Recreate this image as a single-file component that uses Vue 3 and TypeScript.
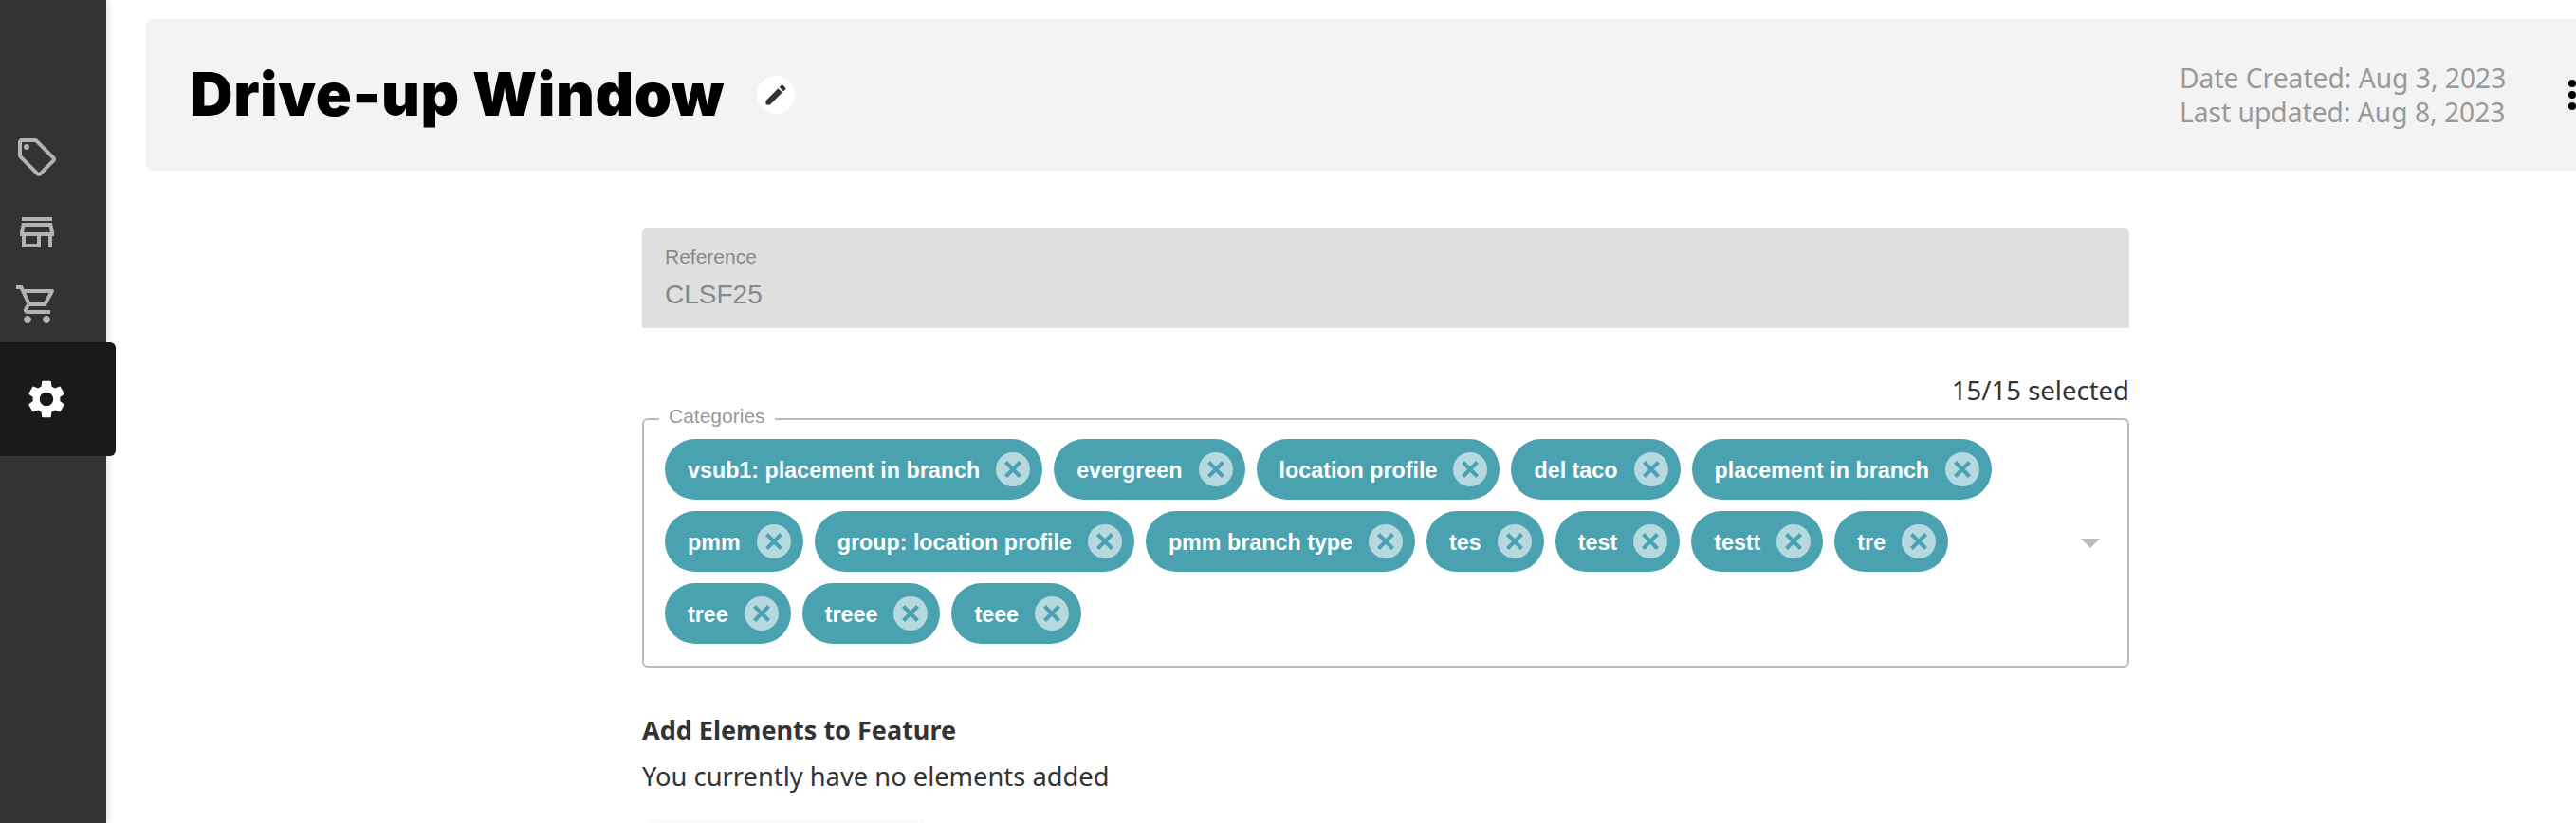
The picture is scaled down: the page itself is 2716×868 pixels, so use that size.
<script setup lang="ts">
const rows: string[][] = [
  ['vsub1: placement in branch', 'evergreen', 'location profile', 'del taco', 'placement in branch'],
  ['pmm', 'group: location profile', 'pmm branch type', 'tes', 'test', 'testt', 'tre'],
  ['tree', 'treee', 'teee'],
]
</script>

<template>
  <div class="page">
    <aside class="side">
      <svg class="ico tag" viewBox="0 0 24 24"><path fill="#b3b3b3" d="M21.41 11.58l-9-9C12.05 2.22 11.55 2 11 2H4c-1.1 0-2 .9-2 2v7c0 .55.22 1.05.59 1.42l9 9c.36.36.86.58 1.41.58s1.05-.22 1.41-.59l7-7c.37-.36.59-.86.59-1.41s-.23-1.06-.59-1.42zM13 20.01L4 11V4h7v-.01l9 8.99-7 7.02z"/><circle fill="#b3b3b3" cx="6.5" cy="6.5" r="1.5"/></svg>
      <svg class="ico store" viewBox="0 0 24 24"><path fill="#b3b3b3" d="M4 4h16v2H4zM20 7H4l-1 5v2h1v6h10v-6h4v6h2v-6h1v-2l-1-5zm-8 11H6v-4h6v4zm-6.96-6l.6-3h12.72l.6 3H5.04z"/></svg>
      <svg class="ico cart" viewBox="0 0 24 24"><path fill="#b3b3b3" d="M15.55 13c.75 0 1.41-.41 1.75-1.03l3.58-6.49A.996.996 0 0 0 20.01 4H5.21l-.94-2H1v2h2l3.6 7.59-1.35 2.44C4.52 15.37 5.48 17 7 17h12v-2H7l1.1-2h7.45zM6.16 6h12.15l-2.76 5H8.53L6.16 6zM7 18c-1.1 0-1.99.9-1.99 2S5.9 22 7 22s2-.9 2-2-.9-2-2-2zm10 0c-1.1 0-1.99.9-1.99 2s.89 2 1.99 2 2-.9 2-2-.9-2-2-2z"/></svg>
      <div class="active">
        <svg class="gear" viewBox="0 0 24 24"><path fill="#fff" d="M19.14 12.94c.04-.3.06-.61.06-.94 0-.32-.02-.64-.07-.94l2.03-1.58a.49.49 0 0 0 .12-.61l-1.92-3.32a.488.488 0 0 0-.59-.22l-2.39.96c-.5-.38-1.03-.7-1.62-.94l-.36-2.54a.484.484 0 0 0-.48-.41h-3.84c-.24 0-.43.17-.47.41l-.36 2.54c-.59.24-1.13.57-1.62.94l-2.39-.96c-.22-.08-.47 0-.59.22L2.74 8.87c-.12.21-.08.47.12.61l2.03 1.58c-.05.3-.09.63-.09.94s.02.64.07.94l-2.03 1.58a.49.49 0 0 0-.12.61l1.92 3.32c.12.22.37.29.59.22l2.39-.96c.5.38 1.03.7 1.62.94l.36 2.54c.05.24.24.41.48.41h3.84c.24 0 .44-.17.47-.41l.36-2.54c.59-.24 1.13-.56 1.62-.94l2.39.96c.22.08.47 0 .59-.22l1.92-3.32c.12-.22.07-.47-.12-.61l-2.01-1.58zM12 15.6c-1.98 0-3.6-1.62-3.6-3.6s1.62-3.6 3.6-3.6 3.6 1.62 3.6 3.6-1.62 3.6-3.6 3.6z"/></svg>
      </div>
    </aside>

    <main class="main">
      <header class="head">
        <h1 class="title">Drive-up Window</h1>
        <span class="edit">
          <svg viewBox="0 0 24 24"><path fill="#333" d="M3 17.25V21h3.75L17.81 9.94l-3.75-3.75L3 17.25zM20.71 7.04a1 1 0 0 0 0-1.41l-2.34-2.34a1 1 0 0 0-1.41 0l-1.83 1.83 3.75 3.75 1.83-1.83z"/></svg>
        </span>
        <div class="dates">
          <div>Date Created: Aug 3, 2023</div>
          <div>Last updated: Aug 8, 2023</div>
        </div>
        <div class="more"><i></i><i></i><i></i></div>
      </header>

      <section class="form">
        <div class="ref">
          <div class="ref-label">Reference</div>
          <div class="ref-value">CLSF25</div>
        </div>
        <div class="count">15/15 selected</div>
        <fieldset class="cats">
          <legend>Categories</legend>
          <div class="chips">
            <div v-for="(row, i) in rows" :key="i" class="chip-row">
              <span v-for="c in row" :key="c" class="chip">
                <span class="chip-text">{{ c }}</span>
                <span class="chip-x">
                  <svg viewBox="0 0 36 36"><path d="M10.5 10.5 L25.5 25.5 M25.5 10.5 L10.5 25.5" stroke="#4aa2b1" stroke-width="4" fill="none"/></svg>
                </span>
              </span>
            </div>
          </div>
          <span class="arrow"></span>
        </fieldset>
        <h2 class="add">Add Elements to Feature</h2>
        <p class="none">You currently have no elements added</p>
        <div class="next"></div>
      </section>
    </main>
  </div>
</template>

<style>
html, body { margin: 0; padding: 0; background: #fff; overflow: hidden; }
</style>

<style scoped>
.page { display: flex; width: 2716px; height: 868px; overflow: hidden; font-family: "Noto Sans", sans-serif; }
.side { position: relative; flex: 0 0 112px; width: 112px; min-width: 0; background: #333; box-shadow: 2px 0 8px rgba(0,0,0,.12); display: flex; flex-direction: column; align-items: flex-start; padding-top: 142px; box-sizing: border-box; z-index: 1; }
.ico { display: block; flex: none; width: 48px; height: 48px; margin-left: 15px; }
.tag { margin-bottom: 31px; }
.store { margin-bottom: 28px; }
.cart { margin-bottom: 16px; }
.active { flex: none; width: 122px; height: 120px; background: #1a1a1a; border-radius: 0 6px 6px 0; display: flex; align-items: center; padding-left: 25px; box-sizing: border-box; }
.gear { width: 48px; height: 48px; }
.main { flex: 1; min-width: 0; padding: 20px 0 0 42px; }
.head { display: flex; align-items: center; height: 160px; background: #f3f3f3; border-radius: 6px 0 0 6px; padding-left: 46px; box-sizing: border-box; }
.title { margin: -2px 0 0; font-family: "Inter", sans-serif; font-weight: 900; font-size: 63px; color: #000; letter-spacing: 0.6px; width: 598px; white-space: nowrap; }
.edit { width: 40px; height: 40px; border-radius: 50%; background: #fff; display: flex; align-items: center; justify-content: center; }
.edit svg { width: 28px; height: 28px; }
.dates { margin-left: auto; width: 410px; font-size: 28.2px; line-height: 36px; color: #999; white-space: nowrap; }
.more { display: flex; flex-direction: column; gap: 4px; width: 8px; }
.more i { display: block; width: 8px; height: 8px; border-radius: 50%; background: #000; }
.form { width: 1568px; margin: 60px 0 0 523px; }
.ref { height: 106px; background: #dfdfdf; border-radius: 6px 6px 0 0; padding: 19px 24px 0; box-sizing: border-box; font-family: "Liberation Sans", sans-serif; }
.ref-label { font-size: 21px; line-height: 24px; color: #888; }
.ref-value { font-size: 28px; line-height: 32px; margin-top: 12px; color: #888; }
.count { margin-top: 50px; text-align: right; font-size: 27.5px; line-height: 32px; color: #333; }
.cats { position: relative; margin: 1px 0 0; padding: 8px 22px 23px; border: 2px solid #bbb; border-radius: 6px; box-sizing: border-box; min-width: 0; }
.cats legend { margin-left: -6px; padding: 0 10px 6px; font-family: "Liberation Sans", sans-serif; font-size: 21px; line-height: 20px; color: #999; }
.chips { display: flex; flex-direction: column; gap: 12px; }
.chip-row { display: flex; gap: 12px; }
.chip { display: flex; align-items: center; height: 64px; border-radius: 32px; background: #4aa2b1; padding: 0 13px 0 24px; box-sizing: border-box; }
.chip-text { font-family: "Liberation Sans", sans-serif; font-weight: 700; font-size: 23.3px; line-height: 28px; padding-top: 2px; color: #fff; white-space: nowrap; }
.chip-x { width: 36px; height: 36px; border-radius: 50%; background: #b6d9e0; margin-left: 17px; }
.chip-x svg { display: block; width: 36px; height: 36px; }
.arrow { position: absolute; right: 29px; top: 113px; width: 0; height: 0; border-left: 10px solid transparent; border-right: 10px solid transparent; border-top: 10px solid #bbb; }
.add { margin: 49px 0 0; font-size: 27px; line-height: 34px; font-weight: 700; color: #333; }
.none { margin: 14px 0 0; font-size: 27.3px; line-height: 36px; color: #333; }
.next { width: 290px; height: 60px; margin: 30px 0 0 8px; box-shadow: 0 0 4px rgba(0,0,0,.08); border-radius: 6px; }
</style>
